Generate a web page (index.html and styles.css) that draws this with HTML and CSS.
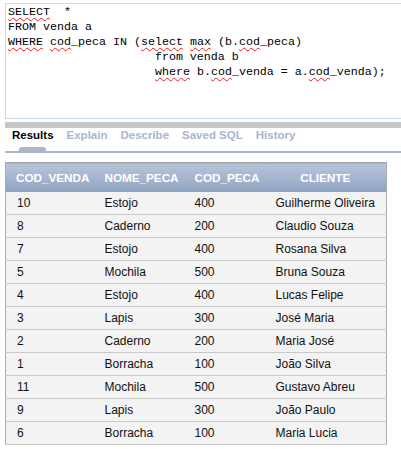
FILE: index.html
```html
<!DOCTYPE html>
<html>
<head>
<meta charset="utf-8">
<link rel="stylesheet" href="styles.css">
</head>
<body>
<div class="editor">
  <div class="line"><span class="sp">SELECT</span><span>  *</span></div>
  <div class="line"><span>FROM venda a</span></div>
  <div class="line"><span class="sp">WHERE</span><span> </span><span class="sp">cod</span><span>_peca IN (</span><span class="sp">select</span><span> </span><span class="sp">max</span><span> (b.</span><span class="sp">cod</span><span>_peca)</span></div>
  <div class="line"><span>                     from venda b</span></div>
  <div class="line"><span>                     </span><span class="sp">where</span><span> b.</span><span class="sp">cod</span><span>_venda = a.</span><span class="sp">cod</span><span>_venda);</span></div>
</div>
<div class="graybar"></div>
<div class="tabs">
  <span class="tab active">Results</span>
  <span class="tab">Explain</span>
  <span class="tab">Describe</span>
  <span class="tab">Saved SQL</span>
  <span class="tab">History</span>
</div>
<table class="results">
  <colgroup>
    <col class="c1"><col class="c2"><col class="c3"><col class="c4">
  </colgroup>
  <thead>
    <tr><th class="h1">COD_VENDA</th><th>NOME_PECA</th><th>COD_PECA</th><th class="center">CLIENTE</th></tr>
  </thead>
  <tbody>
    <tr><td>10</td><td>Estojo</td><td>400</td><td>Guilherme Oliveira</td></tr>
    <tr><td>8</td><td>Caderno</td><td>200</td><td>Claudio Souza</td></tr>
    <tr><td>7</td><td>Estojo</td><td>400</td><td>Rosana Silva</td></tr>
    <tr><td>5</td><td>Mochila</td><td>500</td><td>Bruna Souza</td></tr>
    <tr><td>4</td><td>Estojo</td><td>400</td><td>Lucas Felipe</td></tr>
    <tr><td>3</td><td>Lapis</td><td>300</td><td>José Maria</td></tr>
    <tr><td>2</td><td>Caderno</td><td>200</td><td>Maria José</td></tr>
    <tr><td>1</td><td>Borracha</td><td>100</td><td>João Silva</td></tr>
    <tr><td>11</td><td>Mochila</td><td>500</td><td>Gustavo Abreu</td></tr>
    <tr><td>9</td><td>Lapis</td><td>300</td><td>João Paulo</td></tr>
    <tr><td>6</td><td>Borracha</td><td>100</td><td>Maria Lucia</td></tr>
  </tbody>
</table>
</body>
</html>
```
FILE: styles.css
```css
html, body {
  margin: 0;
  padding: 0;
  background: #ffffff;
}
body {
  width: 401px;
  height: 449px;
  overflow: hidden;
  font-family: "Liberation Sans", Arial, sans-serif;
}
.editor {
  margin: 3px 0 0 5px;
  height: 113px;
  padding: 1px 0 0 2px;
  border: 1px solid #c6dcef;
  border-right: none;
  box-sizing: content-box;
  font-family: "Liberation Mono", "Courier New", monospace;
  font-size: 11.67px;
  line-height: 15px;
  color: #000;
}
.line {
  white-space: pre;
  height: 15px;
}
.sp {
  text-decoration: underline wavy #e02020;
  text-decoration-thickness: 1px;
  text-underline-offset: 2px;
}
.graybar {
  margin: 3px 0 0 5px;
  height: 6px;
  background: #c8c8c8;
}
.tabs {
  display: flex;
  gap: 13px;
  margin-left: 5px;
  padding-left: 7px;
  height: 23px;
  border-bottom: 2px solid #a9b7cc;
  font-size: 11.5px;
  font-weight: bold;
  line-height: 14px;
}
.tab {
  color: #a9b6cb;
  white-space: nowrap;
}
.tab.active {
  color: #000;
  position: relative;
}
.tab.active::after {
  content: "";
  position: absolute;
  left: 7px;
  top: 19px;
  width: 27px;
  height: 4px;
  background: #a9b7cc;
  border-radius: 3px 3px 0 0;
}
.results {
  margin: 9px 0 0 5px;
  width: 382px;
  border-collapse: collapse;
  table-layout: fixed;
  border: 1px solid #a8a8a8;
  font-size: 12px;
}
.c1 { width: 88px; }
.c2 { width: 90px; }
.c3 { width: 81px; }
.c4 { width: auto; }
.results th {
  height: 29px;
  padding: 0 0 0 11px;
  text-align: left;
  color: #ffffff;
  font-weight: bold;
  font-size: 11.7px;
  background: linear-gradient(to bottom, #b7c5dc 0%, #a5b5cf 50%, #8ea2c0 100%);
  white-space: nowrap;
}
.results th.h1 { padding-left: 10px; }
.results th.center { text-align: center; padding: 0; }
.results td {
  height: 22px;
  padding: 0 0 0 11px;
  color: #111;
  background: #f3f3f3;
  border-bottom: 1px solid #c9c9c9;
  white-space: nowrap;
  line-height: 14px;
}
```
